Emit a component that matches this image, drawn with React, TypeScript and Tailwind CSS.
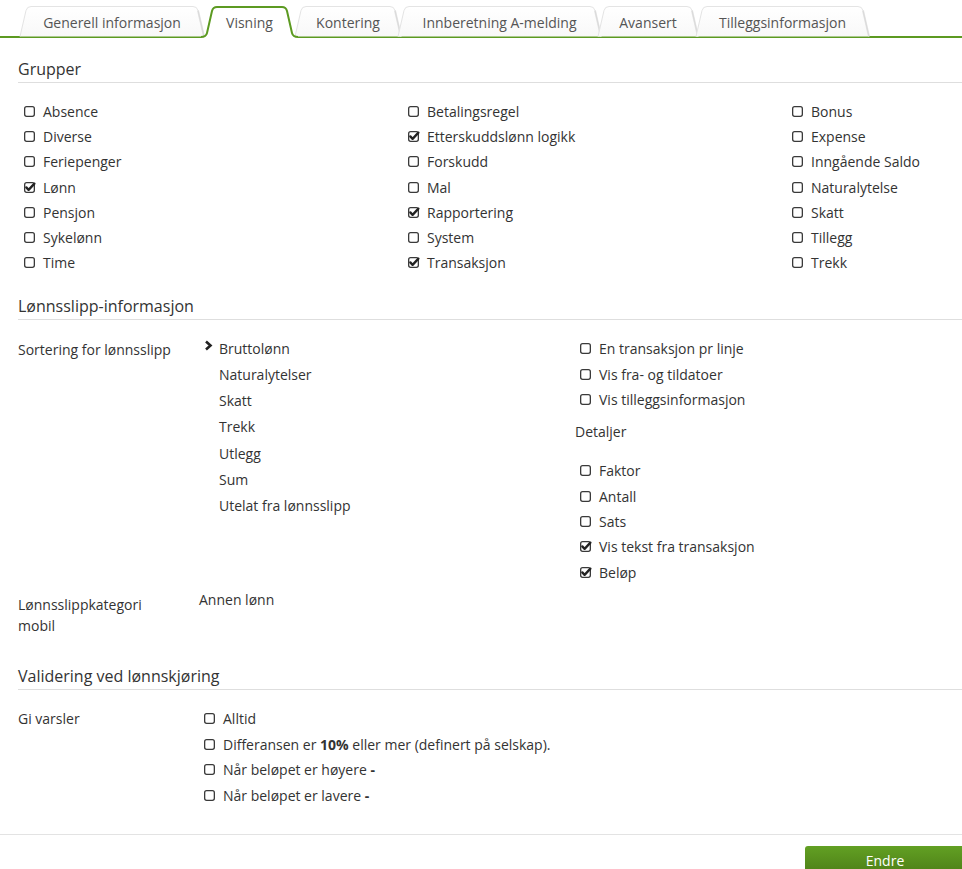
import React from "react";

type TabDef = { label: string; width: number; cls: string; active?: boolean };

const tabs: TabDef[] = [
  { label: "Generell informasjon", width: 184, cls: "w-[184px]" },
  { label: "Visning", width: 97, cls: "w-[97px] -ml-[3px]", active: true },
  { label: "Kontering", width: 106, cls: "w-[106px] -ml-[3px]" },
  { label: "Innberetning A-melding", width: 203, cls: "w-[203px] -ml-[3px]" },
  { label: "Avansert", width: 100, cls: "w-[100px] -ml-[3px]" },
  { label: "Tilleggsinformasjon", width: 173, cls: "w-[173px] -ml-[2px]" },
];

const groups: [string, boolean][][] = [
  [
    ["Absence", false],
    ["Diverse", false],
    ["Feriepenger", false],
    ["Lønn", true],
    ["Pensjon", false],
    ["Sykelønn", false],
    ["Time", false],
  ],
  [
    ["Betalingsregel", false],
    ["Etterskuddslønn logikk", true],
    ["Forskudd", false],
    ["Mal", false],
    ["Rapportering", true],
    ["System", false],
    ["Transaksjon", true],
  ],
  [
    ["Bonus", false],
    ["Expense", false],
    ["Inngående Saldo", false],
    ["Naturalytelse", false],
    ["Skatt", false],
    ["Tillegg", false],
    ["Trekk", false],
  ],
];

const sortOrder = ["Bruttolønn", "Naturalytelser", "Skatt", "Trekk", "Utlegg", "Sum", "Utelat fra lønnsslipp"];

function TabShape({ width, active }: { width: number; active?: boolean }) {
  const w = width;
  if (active) {
    const edge = `M0,31 Q5,31 6,27 L11,5 Q12,1 16,1 L${w - 16},1 Q${w - 12},1 ${w - 11},5 L${w - 6},27 Q${w - 5},31 ${w},31`;
    return (
      <svg width={w} height={33} className="absolute left-0 top-0 overflow-visible">
        <path d={`${edge} L${w},33 L0,33 Z`} fill="#ffffff" />
        <path d={edge} fill="none" stroke="#5c9a21" strokeWidth="2" />
      </svg>
    );
  }
  const edge = `M0,30.5 L6,4.5 Q7,0.5 11,0.5 L${w - 11},0.5 Q${w - 7},0.5 ${w - 6},4.5 L${w},30.5`;
  return (
    <svg width={w} height={31} className="absolute left-0 top-0 overflow-visible">
      <defs>
        <linearGradient id="tabfill" x1="0" y1="0" x2="0" y2="1">
          <stop offset="0" stopColor="#ffffff" />
          <stop offset="1" stopColor="#f8f8f8" />
        </linearGradient>
      </defs>
      <path d={`${edge} Z`} fill="url(#tabfill)" />
      <path d={edge} fill="none" stroke="#e4e4e4" strokeWidth="1" />
      <path d={`M${w - 6},4.5 L${w},30.5`} fill="none" stroke="#d4d4d4" strokeWidth="2" opacity="0.6" />
    </svg>
  );
}

function Tab({ tab }: { tab: TabDef }) {
  return (
    <div className={`relative h-[30px] shrink-0 flex items-center justify-center ${tab.cls} ${tab.active ? "z-10" : ""}`}>
      <TabShape width={tab.width} active={tab.active} />
      <span className="relative text-[14px] text-[#555] pt-[2px]">{tab.label}</span>
    </div>
  );
}

function Box({ checked }: { checked?: boolean }) {
  return (
    <svg width="11" height="11" viewBox="0 0 11 11" className="shrink-0 overflow-visible">
      <rect x="0.65" y="0.65" width="9.7" height="9.7" rx="2" fill="#fff" stroke="#3a3a3a" strokeWidth="1.3" />
      {checked && (
        <path d="M2.3 5.4 L4.6 7.9 L10.4 1.6" fill="none" stroke="#222" strokeWidth="2.3" strokeLinecap="round" strokeLinejoin="round" />
      )}
    </svg>
  );
}

function Check({ label, checked, h = "h-[25.2px]" }: { label: React.ReactNode; checked?: boolean; h?: string }) {
  return (
    <div className={`flex items-center gap-[8px] whitespace-nowrap ${h}`}>
      <Box checked={checked} />
      <span>{label}</span>
    </div>
  );
}

function Heading({ children, extra = "" }: { children: React.ReactNode; extra?: string }) {
  return (
    <div className={`pt-[19px] pb-[1px] leading-[24px] text-[16px] text-[#333] border-b border-[#dedede] ${extra}`}>
      {children}
    </div>
  );
}

export default function App() {
  return (
    <div className="h-[869px] w-full overflow-hidden bg-white font-['Open_Sans',sans-serif] text-[14px] text-[#333]">
      {/* tabs */}
      <div className="flex pt-[6px] pl-[20px] border-b-2 border-[#5c9a21]">
        {tabs.map((t) => (
          <Tab key={t.label} tab={t} />
        ))}
      </div>

      <div className="pl-[18px]">
        <Heading>Grupper</Heading>

        <div className="flex mt-[16px] pl-[6px]">
          {groups.map((col, i) => (
            <div key={i} className="w-[384px] shrink-0 flex flex-col">
              {col.map(([label, checked]) => (
                <Check key={label} label={label} checked={checked} />
              ))}
            </div>
          ))}
        </div>

        <Heading>Lønnsslipp-informasjon</Heading>

        <div className="flex mt-[15px]">
          <div className="w-[181px] shrink-0 pt-[2px] leading-[26px]">Sortering for lønnsslipp</div>
          <div className="w-[376px] shrink-0 flex flex-col">
            {sortOrder.map((item, i) => (
              <div key={item} className="flex h-[26.2px] items-center">
                <div className="w-[20px] shrink-0 flex items-center pl-[5px]">
                  {i === 0 && (
                    <svg width="9" height="11" viewBox="0 0 9 11" className="-mt-[5px]">
                      <path d="M2 1.5 L6.5 5.5 L2 9.5" fill="none" stroke="#222" strokeWidth="2.6" strokeLinejoin="miter" />
                    </svg>
                  )}
                </div>
                <span>{item}</span>
              </div>
            ))}
          </div>
          <div className="flex flex-col pt-[1px]">
            <div className="pl-[5px]">
              <Check label="En transaksjon pr linje" h="h-[25.3px]" />
              <Check label="Vis fra- og tildatoer" h="h-[25.3px]" />
              <Check label="Vis tilleggsinformasjon" h="h-[25.3px]" />
            </div>
            <div className="mt-[8px] leading-[24px]">Detaljer</div>
            <div className="pl-[5px] mt-[14px]">
              <Check label="Faktor" h="h-[25.3px]" />
              <Check label="Antall" h="h-[25.3px]" />
              <Check label="Sats" h="h-[25.3px]" />
              <Check label="Vis tekst fra transaksjon" checked h="h-[25.3px]" />
              <Check label="Beløp" checked h="h-[25.3px]" />
            </div>
          </div>
        </div>

        <div className="flex mt-[4px]">
          <div className="w-[181px] shrink-0 pr-[20px] pt-[5px] leading-[21px]">Lønnsslippkategori mobil</div>
          <div className="leading-[21px]">Annen lønn</div>
        </div>

        <Heading extra="mt-[9px]">Validering ved lønnskjøring</Heading>

        <div className="flex mt-[16px]">
          <div className="w-[181px] shrink-0 leading-[25.6px]">Gi varsler</div>
          <div className="flex flex-col pl-[5px]">
            <Check label="Alltid" h="h-[25.6px]" />
            <Check
              label={
                <>
                  Differansen er <b className="font-bold">10%</b> eller mer (definert på selskap).
                </>
              }
              h="h-[25.6px]"
            />
            <Check
              label={
                <>
                  Når beløpet er høyere <b className="font-bold">-</b>
                </>
              }
              h="h-[25.6px]"
            />
            <Check
              label={
                <>
                  Når beløpet er lavere <b className="font-bold">-</b>
                </>
              }
              h="h-[25.6px]"
            />
          </div>
        </div>
      </div>

      <div className="mt-[26px] border-t border-[#e3e3e3]">
        <div className="flex pl-[805px] mt-[11px]">
          <button className="w-[160px] h-[30px] shrink-0 rounded-tl-[3px] bg-gradient-to-b from-[#62a023] to-[#4c7d17] text-white text-[14px] leading-[30px] text-center">
            Endre
          </button>
        </div>
      </div>
    </div>
  );
}
